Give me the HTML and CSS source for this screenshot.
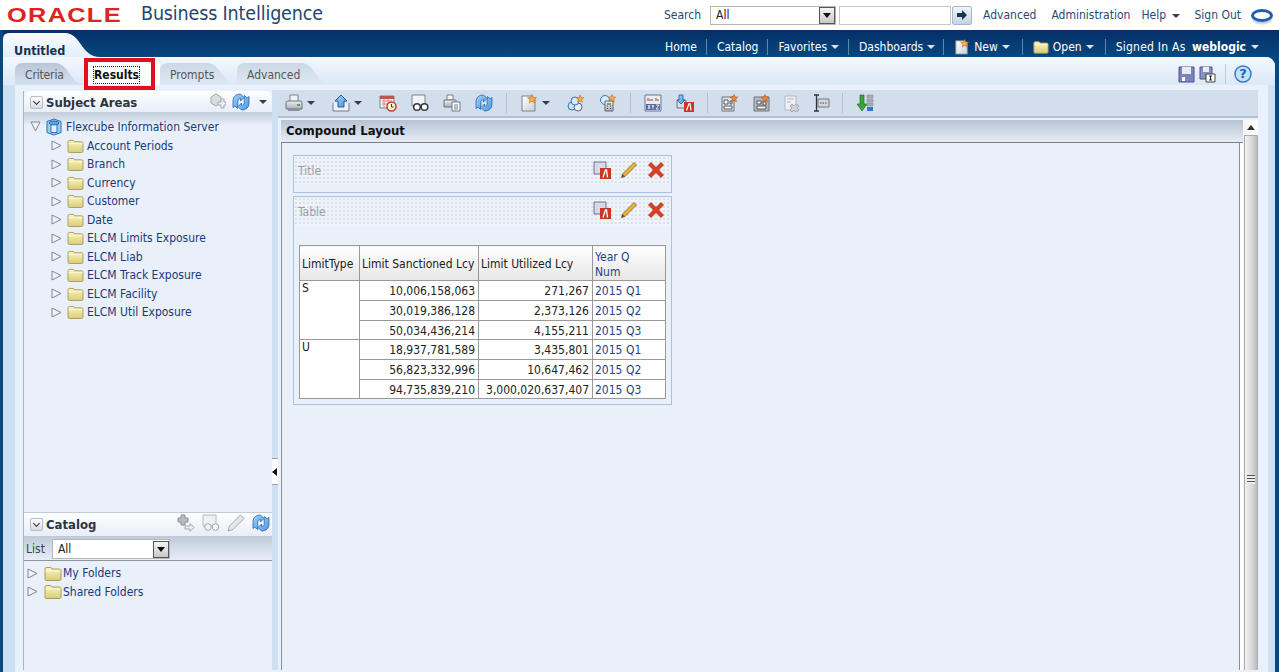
FILE: index.html
```html
<!DOCTYPE html>
<html lang="en">
<head>
<meta charset="utf-8">
<title>Oracle Business Intelligence</title>
<link rel="stylesheet" href="styles.css">
</head>
<body>
<svg class="defs" xmlns="http://www.w3.org/2000/svg">
  <defs>
    <linearGradient id="gFolder" x1="0" y1="0" x2="0" y2="1"><stop offset="0" stop-color="#fbf6bf"/><stop offset="1" stop-color="#d8cc7a"/></linearGradient>
    <linearGradient id="gBlue" x1="0" y1="0" x2="1" y2="1"><stop offset="0" stop-color="#a9d5f8"/><stop offset="1" stop-color="#4a92dc"/></linearGradient>
    <linearGradient id="gGray" x1="0" y1="0" x2="0" y2="1"><stop offset="0" stop-color="#eef0f3"/><stop offset="1" stop-color="#a9afb8"/></linearGradient>
    <linearGradient id="gPage" x1="0" y1="0" x2="1" y2="1"><stop offset="0" stop-color="#ffffff"/><stop offset="1" stop-color="#c9cfd8"/></linearGradient>
    <symbol id="folder" viewBox="0 0 18 15"><path d="M1 13V3q0-1.500 1.500-1.500h4q1 0 1.500 1.500h7.500q1.500 0 1.500 1.500V13q0 1.500-1.500 1.500h-13Q1 14.500 1 13z" fill="url(#gFolder)" stroke="#a89a56"/><path d="M1.500 5h15" stroke="#fdf9d2"/></symbol>
    <symbol id="arrowR" viewBox="0 0 11 11"><path d="M1 1l9 4.500-9 4.500z" fill="#eef3f9" stroke="#7d8791"/></symbol>
    <symbol id="arrowD" viewBox="0 0 11 11"><path d="M1 1h9l-4.500 9z" fill="#eef3f9" stroke="#7d8791"/></symbol>
    <symbol id="cube" viewBox="0 0 18 18"><path d="M9 1l7 2.500v11L9 17l-7-2.500v-11z" fill="#9ccbf2" stroke="#2b6fb4"/><path d="M6 5.500h6v9H6z" fill="#e6f3fe" stroke="#2b6fb4"/><ellipse cx="9" cy="5" rx="5" ry="2" fill="#5ba4e4" stroke="#2b6fb4"/></symbol>
    <symbol id="refresh" viewBox="0 0 18 18"><path d="M8.500 1C4 1 1 3.500 1 8v6.500l1.800-1.300 3 2.300V8c0-1.500.9-2.300 2.700-2.300V8l3.500-3.500L8.500 1z" fill="url(#gBlue)" stroke="#1f67b2" stroke-width=".8"/><path d="M9.500 17c4.500 0 7.500-2.500 7.500-7V3.500l-1.800 1.300-3-2.300V10c0 1.500-.9 2.300-2.700 2.300V10L6 13.500 9.500 17z" fill="url(#gBlue)" stroke="#1f67b2" stroke-width=".8"/></symbol>
    <symbol id="addGray" viewBox="0 0 18 18"><path d="M3 4l5-3 5 3v6l-5 3-5-3z" fill="#d9dde2" stroke="#a3a8ae"/><path d="M10 9h3V6h3v3h2v3h-2v3h-3v-3h-3z" fill="#eceef1" stroke="#a3a8ae"/></symbol>
    <symbol id="addArrow" viewBox="0 0 18 18"><path d="M4 1h4v3h3v4H8v3H4V8H1V4h3z" fill="#b7bcc2" stroke="#8d9298"/><path d="M8 12h5V9.500l4 4-4 4V15H8z" fill="#eceef1" stroke="#a3a8ae"/></symbol>
    <symbol id="printer" viewBox="0 0 18 18"><path d="M5 1h8v7H5z" fill="#f1f3f6" stroke="#7d848d"/><path d="M1 9q0-2 2-2h12q2 0 2 2v6H1z" fill="url(#gGray)" stroke="#6d747c"/><path d="M3 15h12v2H3z" fill="#8b929a"/><path d="M12 10h3v2h-3z" fill="#5aa84a"/></symbol>
    <symbol id="export" viewBox="0 0 18 18"><path d="M1 9v8h16V9" fill="#eef2f7" stroke="#6f7a88"/><path d="M9 1l6 6h-3v6H6V7H3z" fill="url(#gBlue)" stroke="#1a5ea6"/></symbol>
    <symbol id="schedule" viewBox="0 0 18 18"><path d="M1 2h14v12H1z" fill="#eef0f3" stroke="#7a8088"/><path d="M1 2h14v3H1z" fill="#c0564a"/><path d="M3 7h10M3 10h6M5 5v8M9 5v8" stroke="#d98a80"/><circle cx="12.500" cy="12.500" r="4.500" fill="#f4f0e4" stroke="#c7401c" stroke-width="1.500"/><path d="M12.500 10v3h2" stroke="#333" fill="none"/></symbol>
    <symbol id="glasses" viewBox="0 0 18 18"><path d="M1 1h13v11H1z" fill="#f1f3f6" stroke="#7d848d"/><circle cx="6" cy="13" r="3.300" fill="#fff" stroke="#33383e" stroke-width="1.500"/><circle cx="13.500" cy="13" r="3.300" fill="#fff" stroke="#33383e" stroke-width="1.500"/></symbol>
    <symbol id="glassesOff" viewBox="0 0 18 18"><path d="M1 1h13v11H1z" fill="#eef0f3" stroke="#b3b8be"/><circle cx="6" cy="13" r="3.300" fill="#f4f5f7" stroke="#a3a8ae"/><circle cx="13.500" cy="13" r="3.300" fill="#f4f5f7" stroke="#a3a8ae"/></symbol>
    <symbol id="printPage" viewBox="0 0 18 18"><path d="M4 1h6v5H4z" fill="#f1f3f6" stroke="#7d848d"/><path d="M1 6h12v7H1z" fill="url(#gGray)" stroke="#6d747c"/><path d="M9 8h8v9H9z" fill="#fff" stroke="#6f7a88"/><path d="M11 11h4M11 13h4M11 15h4" stroke="#6f7a88"/></symbol>
    <symbol id="newPage" viewBox="0 0 18 18"><path d="M2 2h10l3 3v12H2z" fill="url(#gPage)" stroke="#7c8490"/><path d="M12 .5l1.200 3 3.300.2-2.500 2 .8 3.300-2.800-1.800-2.800 1.800.8-3.300-2.500-2 3.300-.2z" fill="#f3b23a" stroke="#c9661d" stroke-width=".6"/></symbol>
    <symbol id="circlesStar" viewBox="0 0 18 18"><circle cx="5" cy="12" r="4" fill="#cfe3f7" stroke="#3477bd"/><circle cx="11" cy="13" r="4" fill="#e6eef7" stroke="#5c6874"/><circle cx="8" cy="7" r="4" fill="#dbe9f7" stroke="#3477bd"/><path d="M13 1l1 2.500 2.800.2-2.100 1.700.7 2.800-2.400-1.500-2.400 1.500.7-2.800-2.100-1.700 2.800-.2z" fill="#f3b23a" stroke="#c9661d" stroke-width=".6"/></symbol>
    <symbol id="calcStar" viewBox="0 0 18 18"><circle cx="6" cy="6" r="4.500" fill="#dbe9f7" stroke="#3477bd"/><path d="M6 7h8v10H6z" fill="url(#gGray)" stroke="#5c6874"/><path d="M8 10h4M8 12h1M11 12h1M8 14.500h1M11 14.500h1" stroke="#444"/><path d="M13 .5l1 2.500 2.800.2-2.100 1.700.7 2.800-2.400-1.500-2.400 1.500.7-2.800-2.100-1.700 2.800-.2z" fill="#f3b23a" stroke="#c9661d" stroke-width=".6"/></symbol>
    <symbol id="xyz" viewBox="0 0 18 18"><path d="M1 1h16v16H1z" fill="#e9edf3" stroke="#69749e"/><path d="M3 4h2v3H3zM7 5h2v2H7zM11 4h2v3h-2z" fill="#d98a80"/><path d="M5 5h2v2H5zM13 5h2v2h-2z" fill="#8ac27e"/><path d="M2 10h14v6H2z" fill="#5c6aa0"/><path d="M4 11l2 4m0-4l-2 4M8 11l1 2 1-2m-1 2v2M12 11h3l-3 4h3" stroke="#fff" fill="none" stroke-width=".8"/></symbol>
    <symbol id="downA" viewBox="0 0 18 18"><path d="M1 6h9v8H1z" fill="#d7dcea" stroke="#6a7590"/><path d="M3 1h4v5h2L5 10 1 6h2z" fill="url(#gBlue)" stroke="#1a5ea6" stroke-width=".8"/><path d="M8 8h10v10H8z" fill="#cf3426"/><path d="M10.500 16.500l2.500-7h1l1 7" stroke="#fff" fill="none" stroke-width="1.200"/></symbol>
    <symbol id="layoutA" viewBox="0 0 18 18"><path d="M1 1h12v12H1z" fill="#d6dae8" stroke="#6a7590"/><path d="M7 7h11v11H7z" fill="#cf3426"/><path d="M10 16.500l2.500-7.500h1l1 7.500" stroke="#fff" fill="none" stroke-width="1.300"/></symbol>
    <symbol id="pencil" viewBox="0 0 18 18"><path d="M1.500 16.500l1-3.500L14 1.500 16.500 4 5 15.500z" fill="#e7b23f" stroke="#8a6318" stroke-width=".8"/><path d="M1.500 16.500l1-3.500L5 15.500z" fill="#554"/></symbol>
    <symbol id="pencilOff" viewBox="0 0 18 18"><path d="M1 17l1.500-5L13.500 1l3.500 3.500L6 15.500z" fill="#e4e6ea" stroke="#a3a8ae"/></symbol>
    <symbol id="cross" viewBox="0 0 18 18"><path d="M4 1.500l5 5 5-5 2.500 2.500-5 5 5 5-2.500 2.500-5-5-5 5L1.500 14l5-5-5-5z" fill="#d9401f" stroke="#a8260f" stroke-width=".7"/></symbol>
    <symbol id="gridStar" viewBox="0 0 18 18"><path d="M1 3h12v14H1z" fill="#dfe3e8" stroke="#6d747c"/><path d="M3 6h4v4H3zM3 12h8v3H3zM9 7h2v3H9z" fill="#fff" stroke="#555"/><path d="M13 .5l1 2.500 2.800.2-2.100 1.700.7 2.800-2.400-1.500-2.400 1.500.7-2.800-2.100-1.700 2.800-.2z" fill="#f08a2a" stroke="#c9401d" stroke-width=".6"/></symbol>
    <symbol id="gridStar2" viewBox="0 0 18 18"><path d="M1 3h15v14H1z" fill="#b4b9bf" stroke="#6d747c"/><path d="M4 7h4v3H4zM4 12h9v3H4zM10 8h3v3h-3z" fill="#fff" stroke="#555"/><path d="M12 .5l1 2.500 2.800.2-2.100 1.700.7 2.800-2.400-1.500-2.400 1.500.7-2.800-2.100-1.700 2.800-.2z" fill="#f08a2a" stroke="#c9401d" stroke-width=".6"/></symbol>
    <symbol id="gridX" viewBox="0 0 18 18"><path d="M2 2h11v14H2z" fill="#eef0f3" stroke="#b3b8be"/><path d="M4 5h7M4 8h4" stroke="#b3b8be"/><path d="M9 10l2 2 2-2 3 2-2 2 2 2-3 2-2-2-2 2-2-2 2-2-2-2z" fill="#d0d4d9" stroke="#a3a8ae"/></symbol>
    <symbol id="textField" viewBox="0 0 18 18"><path d="M6 5h11v8H6z" fill="#d5d9df" stroke="#6d747c"/><path d="M8 9h7" stroke="#444" stroke-dasharray="1.500 1"/><path d="M2 1h5M2 17h5M4.500 1v16" stroke="#2f3439" stroke-width="1.300" fill="none"/></symbol>
    <symbol id="sortDown" viewBox="0 0 18 18"><path d="M4 1h4v9h3l-5 7-5-7h3z" fill="#38a33a" stroke="#20762a" stroke-width=".7"/><path d="M11 1h6v3h-6zM11 5h6v3h-6zM11 9h6v3h-6z" fill="#a9afb8" stroke="#7d848d" stroke-width=".5"/><path d="M11 13h6v4h-6z" fill="#2f79c6"/></symbol>
    <symbol id="floppy" viewBox="0 0 17 17"><path d="M1 1h15v15H1z" fill="#7c83b8" stroke="#4d5590"/><path d="M4 1h9v7H4z" fill="#e8ebf4"/><path d="M4 11h3v4H4z" fill="#fff"/></symbol>
    <symbol id="floppyAs" viewBox="0 0 17 17"><path d="M1 1h12v12H1z" fill="#8a90bd" stroke="#4d5590"/><path d="M4 1h6v5H4z" fill="#e8ebf4"/><path d="M7 8h9v8H7z" fill="#fff" stroke="#444"/><path d="M10 10h3m-1.500 0v4m-1.500 0h3" stroke="#222"/></symbol>
    <symbol id="help" viewBox="0 0 18 18"><circle cx="9" cy="9" r="8" fill="#c6e2fa" stroke="#2e7cc8" stroke-width="1.500"/></symbol>
    <symbol id="goArrow" viewBox="0 0 12 12"><path d="M1 4h5V1l5 5-5 5V8H1z" fill="#15364f"/></symbol>
  </defs>
</svg>

<header class="top">
  <div class="brand">
    <span class="logo">ORACLE</span>
    <span class="app">Business Intelligence</span>
  </div>
  <div class="searchbar">
    <span class="toplink search-label">Search</span>
    <div class="select select-top"><span>All</span><b class="select-btn"></b></div>
    <div class="text-input"></div>
    <button class="go"><svg class="i12"><use href="#goArrow"/></svg></button>
    <a class="toplink adv">Advanced</a>
    <a class="toplink admin">Administration</a>
    <a class="toplink">Help <i class="caret dark"></i></a>
    <a class="toplink">Sign Out</a>
    <span class="o-mark"></span>
  </div>
</header>

<nav class="nav">
  <div class="doc-tab">Untitled</div>
  <div class="nav-items">
    <a class="nav-item pr9">Home</a>
    <a class="nav-item pr9">Catalog</a>
    <a class="nav-item pr9">Favorites <i class="caret"></i></a>
    <a class="nav-item pr8">Dashboards <i class="caret"></i></a>
    <a class="nav-item pr12"><svg class="i16"><use href="#newPage"/></svg>New <i class="caret"></i></a>
    <a class="nav-item pr11"><svg class="i16"><use href="#folder"/></svg>Open <i class="caret"></i></a>
    <a class="nav-item last"><span class="signed">Signed In As</span>&nbsp; <b>weblogic</b> <i class="caret"></i></a>
  </div>
</nav>

<main class="panel">
  <div class="tabbar">
    <a class="tab tab-criteria">Criteria</a>
    <a class="tab tab-results"><span class="focus">Results</span></a>
    <a class="tab tab-prompts">Prompts</a>
    <a class="tab tab-advanced">Advanced</a>
    <div class="tab-actions">
      <svg class="i17"><use href="#floppy"/></svg>
      <svg class="i17"><use href="#floppyAs"/></svg>
      <span class="vsep"></span>
      <span class="help"><svg class="i18"><use href="#help"/></svg><em>?</em></span>
    </div>
    <div class="highlight"></div>
  </div>

  <div class="workspace">
    <aside class="side">
      <section class="subject">
        <header class="acc-head">
          <span class="acc-toggle"></span><h2>Subject Areas</h2>
          <div class="acc-tools">
            <svg class="i18"><use href="#addGray"/></svg>
            <svg class="i18"><use href="#refresh"/></svg>
            <i class="caret dark"></i>
          </div>
        </header>
        <ul class="tree tree-subject">
          <li class="root"><svg class="i11"><use href="#arrowD"/></svg><svg class="i18 cube"><use href="#cube"/></svg><a>Flexcube Information Server</a></li>
          <li><svg class="i11"><use href="#arrowR"/></svg><svg class="fold"><use href="#folder"/></svg><a>Account Periods</a></li>
          <li><svg class="i11"><use href="#arrowR"/></svg><svg class="fold"><use href="#folder"/></svg><a>Branch</a></li>
          <li><svg class="i11"><use href="#arrowR"/></svg><svg class="fold"><use href="#folder"/></svg><a>Currency</a></li>
          <li><svg class="i11"><use href="#arrowR"/></svg><svg class="fold"><use href="#folder"/></svg><a>Customer</a></li>
          <li><svg class="i11"><use href="#arrowR"/></svg><svg class="fold"><use href="#folder"/></svg><a>Date</a></li>
          <li><svg class="i11"><use href="#arrowR"/></svg><svg class="fold"><use href="#folder"/></svg><a>ELCM Limits Exposure</a></li>
          <li><svg class="i11"><use href="#arrowR"/></svg><svg class="fold"><use href="#folder"/></svg><a>ELCM Liab</a></li>
          <li><svg class="i11"><use href="#arrowR"/></svg><svg class="fold"><use href="#folder"/></svg><a>ELCM Track Exposure</a></li>
          <li><svg class="i11"><use href="#arrowR"/></svg><svg class="fold"><use href="#folder"/></svg><a>ELCM Facility</a></li>
          <li><svg class="i11"><use href="#arrowR"/></svg><svg class="fold"><use href="#folder"/></svg><a>ELCM Util Exposure</a></li>
        </ul>
      </section>
      <section class="catalog">
        <header class="acc-head">
          <span class="acc-toggle"></span><h2>Catalog</h2>
          <div class="acc-tools cat-tools">
            <svg class="i18"><use href="#addArrow"/></svg>
            <svg class="i18"><use href="#glassesOff"/></svg>
            <svg class="i18"><use href="#pencilOff"/></svg>
            <svg class="i18"><use href="#refresh"/></svg>
          </div>
        </header>
        <div class="list-row">
          <span>List</span>
          <div class="select select-cat"><span>All</span><b class="select-btn"></b></div>
        </div>
        <ul class="tree tree-catalog">
          <li><svg class="i11"><use href="#arrowR"/></svg><svg class="fold fold-lg"><use href="#folder"/></svg><a>My Folders</a></li>
          <li><svg class="i11"><use href="#arrowR"/></svg><svg class="fold fold-lg"><use href="#folder"/></svg><a>Shared Folders</a></li>
        </ul>
      </section>
    </aside>

    <div class="splitter"><span class="split-handle"></span></div>

    <div class="editor">
      <div class="toolbar">
        <span class="tool drop"><svg class="i18"><use href="#printer"/></svg><i class="caret dark"></i></span>
        <span class="tool drop"><svg class="i18"><use href="#export"/></svg><i class="caret dark"></i></span>
        <span class="tool"><svg class="i18"><use href="#schedule"/></svg></span>
        <span class="tool"><svg class="i18"><use href="#glasses"/></svg></span>
        <span class="tool"><svg class="i18"><use href="#printPage"/></svg></span>
        <span class="tool"><svg class="i18"><use href="#refresh"/></svg></span>
        <span class="tsep"></span>
        <span class="tool drop"><svg class="i18"><use href="#newPage"/></svg><i class="caret dark"></i></span>
        <span class="tool"><svg class="i18"><use href="#circlesStar"/></svg></span>
        <span class="tool"><svg class="i18"><use href="#calcStar"/></svg></span>
        <span class="tsep"></span>
        <span class="tool"><svg class="i18"><use href="#xyz"/></svg></span>
        <span class="tool"><svg class="i18"><use href="#downA"/></svg></span>
        <span class="tsep"></span>
        <span class="tool"><svg class="i18"><use href="#gridStar"/></svg></span>
        <span class="tool"><svg class="i18"><use href="#gridStar2"/></svg></span>
        <span class="tool tool-28"><svg class="i18"><use href="#gridX"/></svg></span>
        <span class="tool tool-30"><svg class="i18"><use href="#textField"/></svg></span>
        <span class="tsep"></span>
        <span class="tool"><svg class="i18"><use href="#sortDown"/></svg></span>
      </div>

      <div class="pane">
        <div class="layout">
          <h1 class="layout-head">Compound Layout</h1>
          <div class="layout-body">
            <section class="view view-title">
              <div class="view-bar">
                <span>Title</span>
                <div class="view-tools">
                  <svg class="i18"><use href="#layoutA"/></svg>
                  <svg class="i18"><use href="#pencil"/></svg>
                  <svg class="i18"><use href="#cross"/></svg>
                </div>
              </div>
            </section>
            <section class="view view-table">
              <div class="view-bar bar-table">
                <span>Table</span>
                <div class="view-tools">
                  <svg class="i18"><use href="#layoutA"/></svg>
                  <svg class="i18"><use href="#pencil"/></svg>
                  <svg class="i18"><use href="#cross"/></svg>
                </div>
              </div>
              <table class="data">
                <colgroup><col class="c1"><col class="c2"><col class="c3"><col class="c4"></colgroup>
                <thead>
                  <tr><th>LimitType</th><th>Limit Sanctioned Lcy</th><th>Limit Utilized Lcy</th><th class="lnk">Year Q<br>Num</th></tr>
                </thead>
                <tbody>
                  <tr class="r20"><td rowspan="3" class="top-cell">S</td><td class="num">10,006,158,063</td><td class="num">271,267</td><td class="lnk">2015 Q1</td></tr>
                  <tr class="r20"><td class="num">30,019,386,128</td><td class="num">2,373,126</td><td class="lnk">2015 Q2</td></tr>
                  <tr class="r19"><td class="num">50,034,436,214</td><td class="num">4,155,211</td><td class="lnk">2015 Q3</td></tr>
                  <tr class="r20"><td rowspan="3" class="top-cell">U</td><td class="num">18,937,781,589</td><td class="num">3,435,801</td><td class="lnk">2015 Q1</td></tr>
                  <tr class="r20"><td class="num">56,823,332,996</td><td class="num">10,647,462</td><td class="lnk">2015 Q2</td></tr>
                  <tr class="r19"><td class="num">94,735,839,210</td><td class="num">3,000,020,637,407</td><td class="lnk">2015 Q3</td></tr>
                </tbody>
              </table>
            </section>
          </div>
        </div>
        <div class="scrollbar">
          <span class="sb-up"></span>
          <div class="sb-thumb"><span class="sb-grip"></span></div>
        </div>
      </div>
    </div>
  </div>
</main>
</body>
</html>
```
FILE: styles.css
```css
* { box-sizing: border-box; }
html, body { margin: 0; padding: 0; }
body {
  width: 1279px;
  height: 672px;
  overflow: hidden;
  background: #07487f;
  font-family: "DejaVu Sans", Tahoma, sans-serif;
  font-stretch: condensed;
  font-size: 12px;
  color: #222;
}
ul { list-style: none; margin: 0; padding: 0; }
h1, h2 { margin: 0; }
svg { display: block; flex: none; }
.defs { width: 0; height: 0; }
.i11 { width: 11px; height: 11px; }
.i12 { width: 12px; height: 12px; }
.i16 { width: 16px; height: 16px; }
.i17 { width: 17px; height: 17px; }
.i18 { width: 18px; height: 18px; }

.caret {
  display: inline-block;
  width: 0;
  height: 0;
  border-left: 4px solid transparent;
  border-right: 4px solid transparent;
  border-top: 4px solid #d8e6f4;
  margin-left: 3px;
  vertical-align: 1px;
}
.caret.dark { border-top-color: #2c3f55; }

/* Top header */
.top {
  height: 30px;
  background: #fff;
  display: flex;
  justify-content: space-between;
  align-items: center;
}
.brand { display: flex; align-items: center; padding-left: 7px; }
.logo {
  width: 113px;
  display: block;
  font-family: "Liberation Sans", Arial, sans-serif;
  font-stretch: normal;
  font-size: 20px;
  font-weight: 700;
  line-height: 24px;
  letter-spacing: 1px;
  color: #e0231f;
  transform: scaleX(1.27);
  transform-origin: left center;
}
.app {
  margin-left: 21px;
  margin-top: -2px;
  font-size: 19.500px;
  letter-spacing: -.15px;
  line-height: 28px;
  color: #24476e;
}
.searchbar { display: flex; align-items: center; height: 30px; padding-right: 6px; }
.toplink { color: #2b4a70; margin-right: 14px; white-space: nowrap; }
.toplink.admin { margin-right: 11px; }
.toplink.adv { margin-right: 15px; }
.search-label { margin-right: 9px; }
.select {
  display: flex;
  align-items: center;
  justify-content: space-between;
  background: #fff;
  border: 1px solid #b4b8bd;
  padding-left: 5px;
  color: #222;
}
.select-top { width: 126px; height: 19px; }
.select-cat { width: 118px; height: 20px; }
.select-btn {
  width: 16px;
  height: 17px;
  border: 1px solid #555;
  background: linear-gradient(#f4f4f4, #c9c9c9);
  display: flex;
  align-items: center;
  justify-content: center;
}
.select-btn::after {
  content: "";
  border-left: 4px solid transparent;
  border-right: 4px solid transparent;
  border-top: 5px solid #111;
}
.text-input {
  width: 112px;
  height: 19px;
  margin-left: 3px;
  background: #fff;
  border: 1px solid #c4c8cd;
}
.go {
  width: 20px;
  height: 19px;
  margin: 0 11px 0 1px;
  padding: 0;
  display: flex;
  align-items: center;
  justify-content: center;
  background: linear-gradient(#f2f6fa, #c4d2e0);
  border: 1px solid #a9b6c4;
  border-radius: 2px;
}
.o-mark {
  width: 22px;
  height: 13px;
  margin-left: -4px;
  border: 3px solid #1f5fa8;
  border-radius: 50%;
  box-shadow: 0 3px 2px -1px #b9cde2;
}

/* Navigation */
.nav {
  height: 27px;
  display: flex;
  justify-content: space-between;
  align-items: flex-end;
  background: linear-gradient(#052f67, #07487f);
  border-left: 3px solid #07487f;
}
.doc-tab {
  width: 97px;
  height: 24px;
  padding: 10px 0 0 11px;
  line-height: 15px;
  font-weight: 700;
  font-size: 12.500px;
  color: #17304f;
  background: linear-gradient(#f6fafe, #e4eefa);
  clip-path: path("M0 24V6Q0 0 6 0H62C78 0 78 24 97 24Z");
}
.nav-items {
  display: flex;
  align-items: center;
  height: 27px;
  padding: 7px 20px 0 0;
  color: #fff;
}
.nav-item {
  display: flex;
  align-items: center;
  height: 16px;
  padding: 0 10px;
  border-left: 1px solid #5d86ad;
  white-space: nowrap;
}
.nav-item:first-child { border-left: 0; }
.nav-item.pr8 { padding-right: 8px; }
.nav-item.pr9 { padding-right: 9px; }
.nav-item.pr11 { padding-right: 11px; }
.nav-item.pr12 { padding-right: 12px; }
.nav-item.last { padding-right: 0; }
.nav-item .caret { margin-left: 4px; }
.nav-item.last .caret { margin-left: 5px; }
.nav-item svg { margin-right: 4px; }
.nav-item b { margin-left: 3px; }
.signed { letter-spacing: .25px; }

/* Panel */
.panel {
  width: 1272px;
  height: 615px;
  margin-left: 3px;
  background: #cfe0f2;
  border-top-right-radius: 9px;
  overflow: hidden;
}
.tabbar {
  position: relative;
  height: 28px;
  padding: 6px 23px 0 12px;
  display: flex;
  background: linear-gradient(#f2f8fe, #dce8f6);
}
.tab {
  display: block;
  height: 22px;
  padding-top: 5px;
  color: #555;
  background: linear-gradient(#ccd8e6, #dfe8f4);
}
.tab-criteria {
  width: 70px;
  padding-left: 10px;
  letter-spacing: -.15px;
  background: linear-gradient(#b8c6d6, #d6e1ee);
  clip-path: path("M0 22V8Q0 0 8 0H40C54 0 56 22 70 22Z");
}
.tab-results {
  width: 75px;
  padding: 3px 0 0 8px;
  background: #fff;
  color: #111;
  font-weight: 700;
}
.focus { display: inline-block; border: 1px dotted #222; padding: 1px 0; line-height: 14px; }
.tab-prompts {
  width: 77px;
  padding-left: 10px;
  clip-path: path("M0 22V8Q0 0 8 0H47C61 0 63 22 77 22Z");
}
.tab-advanced {
  width: 94px;
  padding-left: 10px;
  clip-path: path("M0 22V8Q0 0 8 0H64C78 0 80 22 94 22Z");
}
.tab-actions {
  margin-left: auto;
  display: flex;
  align-items: center;
  height: 22px;
  gap: 4px;
}
.vsep { width: 1px; height: 20px; margin: 0 4px 0 5px; background: #bccbdc; }
.help { display: block; width: 18px; height: 18px; position: relative; }
.help em {
  position: absolute;
  inset: 0;
  text-align: center;
  font: 700 13px/18px "DejaVu Sans", sans-serif;
  color: #1b63b0;
}
.highlight {
  position: absolute;
  left: 81px;
  top: 1px;
  width: 71px;
  height: 32px;
  border: 4px solid #e2101e;
}

/* Workspace */
.workspace {
  height: 587px;
  margin: 0 7px 0 12px;
  padding: 5px 9px 2px 8px;
  display: flex;
  background: #e9f2fc;
}
.side {
  width: 249px;
  display: flex;
  flex-direction: column;
  margin-top: 1px;
  border-left: 1px solid #a9b4c2;
  background: #e9f0fa;
}
.subject { flex: 1; }
.catalog { height: 158px; border-top: 1px solid #c4ccd6; }
.acc-head {
  height: 21px;
  display: flex;
  align-items: center;
  padding: 1px 0 0 6px;
  border-radius: 6px 6px 0 0;
  background: linear-gradient(#fdfeff, #e7eef8);
}
.catalog .acc-head { height: 23px; padding-top: 0; padding-bottom: 1px; border-radius: 0; }
.acc-toggle {
  width: 13px;
  height: 13px;
  border: 1px solid #b6bdc6;
  border-radius: 2px;
  background: linear-gradient(#fff, #d6dbe2);
  position: relative;
}
.acc-toggle::after {
  content: "";
  position: absolute;
  left: 3px;
  top: 2px;
  width: 4px;
  height: 4px;
  border-right: 1px solid #333;
  border-bottom: 1px solid #333;
  transform: rotate(45deg);
}
.acc-head h2 {
  margin-left: 3px;
  font-size: 13px;
  font-weight: 700;
  color: #2c3440;
}
.acc-tools {
  margin-left: auto;
  display: flex;
  align-items: center;
  gap: 6px;
  padding-right: 5px;
}
.cat-tools { gap: 7px; padding-right: 2px; margin-top: -3px; }
.tree a { color: #1b3a7a; white-space: nowrap; }
.tree li { display: flex; align-items: center; height: 18.500px; }
.tree-subject {
  padding-top: 5px;
  height: 230px;
  background: linear-gradient(#c3cddb, #e9f0fa 14px);
}
.tree-subject li { padding-left: 27px; }
.tree-subject li.root { padding-left: 6px; height: 19.500px; }
.cube { margin: 0 3px 0 4px; }
.fold { width: 17px; height: 14px; margin: 0 3px 0 5px; }
.fold-lg { width: 18px; height: 15px; margin: 0 1px 0 6px; }
.list-row {
  height: 25px;
  display: flex;
  align-items: center;
  gap: 7px;
  padding: 2px 0 0 2px;
  color: #444;
  border-bottom: 1px solid #8f959d;
  background: linear-gradient(#bfc9d8, #e7eef8);
}
.tree-catalog { padding-top: 3px; }
.tree-catalog li { padding-left: 3px; }
.splitter {
  width: 6px;
  background: #cfe0f2;
  display: flex;
  align-items: center;
  padding-top: 183px;
}
.split-handle {
  width: 6px;
  height: 27px;
  background: #fff;
  border-top: 1px solid #9aa3ad;
  border-bottom: 1px solid #9aa3ad;
  display: flex;
  align-items: center;
}
.split-handle::before {
  content: "";
  border-top: 4px solid transparent;
  border-bottom: 4px solid transparent;
  border-right: 5px solid #111;
}

/* Editor */
.editor { width: 980px; display: flex; flex-direction: column; }
.toolbar {
  height: 28px;
  display: flex;
  align-items: center;
  background: #d3deec;
  border-bottom: 2px solid #b6c1cf;
  padding-bottom: 1px;
}
.tool { width: 32px; display: flex; align-items: center; justify-content: center; }
.tool.drop { width: 47px; padding-right: 15px; position: relative; }
.tool.drop .caret { position: absolute; left: 29px; top: 7px; margin: 0; }
.tool-28 { width: 28px; }
.tool-30 { width: 30px; }
.tsep { width: 13px; display: flex; justify-content: center; }
.tsep::before { content: ""; width: 1px; height: 20px; background: #b3bfce; }
.pane {
  flex: 1;
  min-height: 0;
  display: flex;
  padding-left: 3px;
  padding-top: 2px;
  background: #e9f2fc;
}
.layout {
  width: 962px;
  display: flex;
  flex-direction: column;
  background: #fff;
}
.layout-head {
  height: 23px;
  padding: 3px 0 0 5px;
  font-size: 13px;
  font-weight: 700;
  color: #111;
  line-height: 15px;
  background: linear-gradient(#b7c2d2, #e6edf6);
  border-bottom: 1px solid #7b8088;
}
.layout-body {
  flex: 1;
  width: 959px;
  padding: 12px 0 0 11px;
  background: #e9f0f9;
  border-left: 1px solid #888e96;
  border-right: 1px solid #888e96;
}
.view {
  width: 379px;
  border: 1px solid #a9c3de;
  margin-bottom: 3px;
}
.view-title { height: 38px; }
.view-title .view-bar > span { margin-top: 2px; }
.view-table { height: 209px; }
.view-bar {
  height: 28px;
  display: flex;
  align-items: center;
  justify-content: space-between;
  padding: 0 6px 0 4px;
  color: #9a9fa6;
  background-color: #eef3fa;
  background-image: radial-gradient(circle, #d9e0ea .8px, transparent 1px);
  background-size: 4px 4px;
}
.bar-table { height: 29px; }
.bar-table .view-tools { margin-top: -3px; }
.view-tools { display: flex; align-items: center; gap: 9px; }
.data {
  width: 367px;
  margin: 19px 0 0 5px;
  border-collapse: collapse;
  table-layout: fixed;
  background: #fff;
  line-height: 15px;
}
.c1 { width: 60px; }
.c2 { width: 119px; }
.c3 { width: 114px; }
.c4 { width: 73px; }
.data th, .data td { border: 1px solid #999; padding: 1px 2px 0; font-weight: 400; color: #222; }
.data th { height: 35px; padding-top: 3px; text-align: left; background: linear-gradient(#fff, #e6e6e6); }
.data .lnk { color: #1f3f8f; }
.data .num { text-align: right; padding-right: 3px; }
.data .top-cell { vertical-align: top; padding-top: 0; }
.r20 td { height: 20px; }
.r19 td { height: 19px; padding-top: 2px; }

.scrollbar {
  width: 15px;
  background: linear-gradient(90deg, #f4f4f4, #fff);
  display: flex;
  flex-direction: column;
  align-items: center;
}
.sb-up {
  margin: 5px 0 5px;
  border-left: 4px solid transparent;
  border-right: 4px solid transparent;
  border-bottom: 5px solid #333;
}
.sb-thumb {
  width: 14px;
  flex: 1;
  border: 1px solid #a9adb2;
  border-bottom: 0;
  background: linear-gradient(90deg, #f2f2f2, #dcdcdc 50%, #bdbdbd);
  display: flex;
  justify-content: center;
  padding-top: 339px;
}
.sb-grip {
  width: 8px;
  height: 9px;
  background: repeating-linear-gradient(#555 0 1px, #eee 1px 3px);
}
```
